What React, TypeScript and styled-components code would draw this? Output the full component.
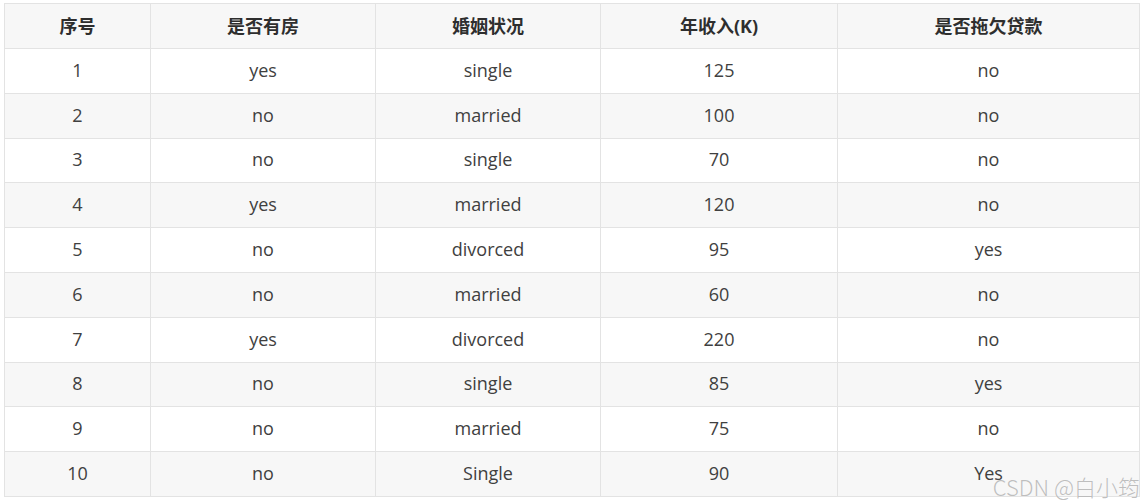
import React, { FC } from "react";
import styled, { createGlobalStyle } from "styled-components";

const GlobalStyle = createGlobalStyle`
  html, body {
    margin: 0;
    padding: 0;
    background: #ffffff;
  }
`;

const Page = styled.div`
  position: relative;
  width: 1142px;
  height: 504px;
  padding: 3px 0 0 4px;
  box-sizing: border-box;
  font-family: "Open Sans", "Noto Sans CJK SC", sans-serif;
`;

const Table = styled.table`
  width: 1136px;
  border-collapse: collapse;
  table-layout: fixed;
  font-size: 18px;
  color: #404040;
`;

const HeadCell = styled.th<{ width?: number }>`
  ${p => (p.width ? `width: ${p.width}px;` : "")}
  height: 42px;
  padding: 0 0 2px;
  border: 1px solid #e3e3e3;
  background: #f7f7f7;
  font-weight: 700;
  text-align: center;
  color: #2e2e2e;
`;

const Row = styled.tr<{ striped?: boolean }>`
  height: 44.8px;
  background: ${p => (p.striped ? "#f7f7f7" : "#ffffff")};
`;

const Cell = styled.td`
  padding: 0 0 2px;
  border: 1px solid #e3e3e3;
  text-align: center;
  vertical-align: middle;
`;

const Watermark = styled.div`
  position: absolute;
  right: 2px;
  bottom: 7px;
  font-family: "Noto Sans CJK SC", "Noto Sans", sans-serif;
  font-weight: 300;
  font-size: 22px;
  line-height: 1;
  color: rgba(170, 170, 170, 0.75);
  text-shadow: 0 0 1px rgba(255, 255, 255, 0.8);
  pointer-events: none;
`;

type Loan = {
  house: string;
  marital: string;
  income: number;
  defaulted: string;
};

const columns = [
  { title: "序号", width: 145 },
  { title: "是否有房", width: 224 },
  { title: "婚姻状况", width: 224 },
  { title: "年收入(K)", width: 236 },
  { title: "是否拖欠贷款" },
];

const rows: Loan[] = [
  { house: "yes", marital: "single", income: 125, defaulted: "no" },
  { house: "no", marital: "married", income: 100, defaulted: "no" },
  { house: "no", marital: "single", income: 70, defaulted: "no" },
  { house: "yes", marital: "married", income: 120, defaulted: "no" },
  { house: "no", marital: "divorced", income: 95, defaulted: "yes" },
  { house: "no", marital: "married", income: 60, defaulted: "no" },
  { house: "yes", marital: "divorced", income: 220, defaulted: "no" },
  { house: "no", marital: "single", income: 85, defaulted: "yes" },
  { house: "no", marital: "married", income: 75, defaulted: "no" },
  { house: "no", marital: "Single", income: 90, defaulted: "Yes" },
];

const App: FC = () => (
  <Page>
    <GlobalStyle />
    <Table>
      <thead>
        <tr>
          {columns.map(c => (
            <HeadCell key={c.title} width={c.width}>
              {c.title}
            </HeadCell>
          ))}
        </tr>
      </thead>
      <tbody>
        {rows.map((r, i) => (
          <Row key={i} striped={i % 2 === 1}>
            <Cell>{i + 1}</Cell>
            <Cell>{r.house}</Cell>
            <Cell>{r.marital}</Cell>
            <Cell>{r.income}</Cell>
            <Cell>{r.defaulted}</Cell>
          </Row>
        ))}
      </tbody>
    </Table>
    <Watermark>CSDN @白小筠</Watermark>
  </Page>
);

export default App;
